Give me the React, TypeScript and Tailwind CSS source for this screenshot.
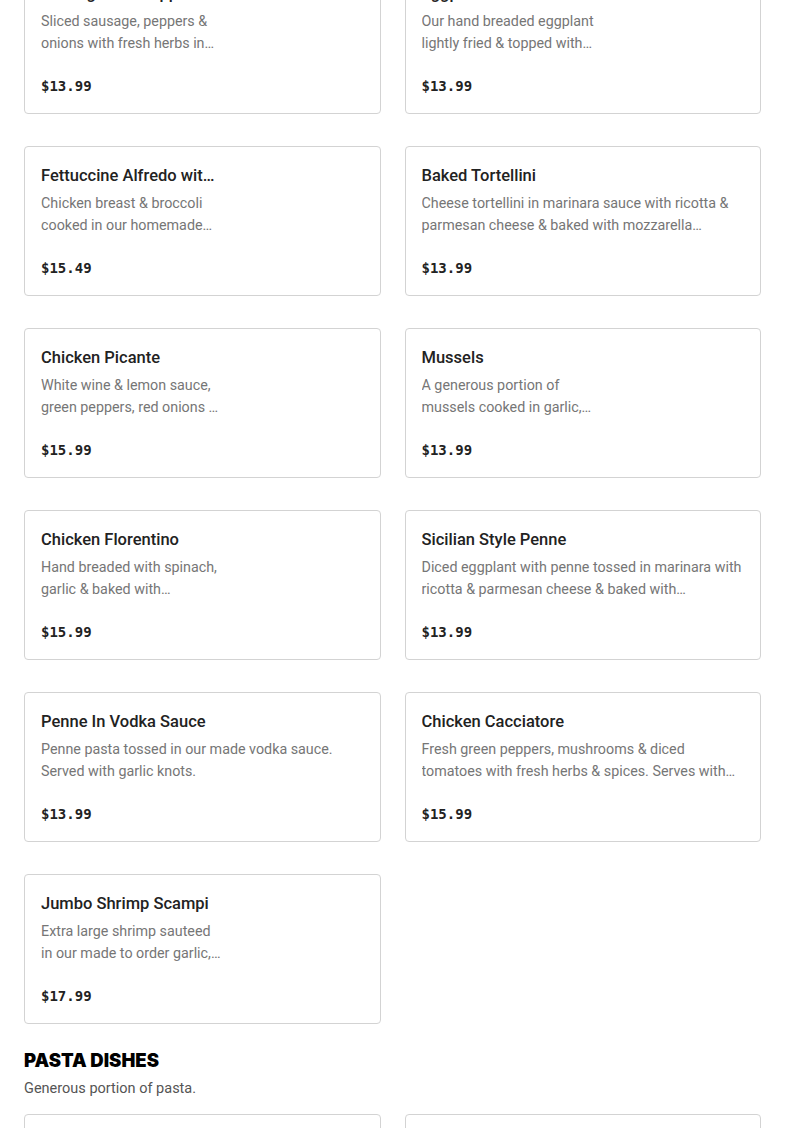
import React from "react";

type Item = {
  name: string;
  desc: string;
  price: string;
  photo?: boolean;
};

const items: Item[] = [
  { name: "Sausage and Peppers", desc: "Sliced sausage, peppers & onions with fresh herbs in marinara sauce.", price: "$13.99", photo: true },
  { name: "Eggplant Parm", desc: "Our hand breaded eggplant lightly fried & topped with marinara & mozzarella.", price: "$13.99", photo: true },
  { name: "Fettuccine Alfredo with Chicken & Broccoli", desc: "Chicken breast & broccoli cooked in our homemade alfredo sauce.", price: "$15.49", photo: true },
  { name: "Baked Tortellini", desc: "Cheese tortellini in marinara sauce with ricotta & parmesan cheese & baked with mozzarella cheese.", price: "$13.99" },
  { name: "Chicken Picante", desc: "White wine & lemon sauce, green peppers, red onions & capers.", price: "$15.99", photo: true },
  { name: "Mussels", desc: "A generous portion of mussels cooked in garlic, white wine & marinara.", price: "$13.99", photo: true },
  { name: "Chicken Florentino", desc: "Hand breaded with spinach, garlic & baked with mozzarella cheese.", price: "$15.99", photo: true },
  { name: "Sicilian Style Penne", desc: "Diced eggplant with penne tossed in marinara with ricotta & parmesan cheese & baked with mozzarella cheese.", price: "$13.99" },
  { name: "Penne In Vodka Sauce", desc: "Penne pasta tossed in our made vodka sauce. Served with garlic knots.", price: "$13.99" },
  { name: "Chicken Cacciatore", desc: "Fresh green peppers, mushrooms & diced tomatoes with fresh herbs & spices. Serves with pasta.", price: "$15.99" },
  { name: "Jumbo Shrimp Scampi", desc: "Extra large shrimp sauteed in our made to order garlic, butter & white wine sauce.", price: "$17.99", photo: true },
];

function MenuCard({ item }: { item: Item }) {
  return (
    <div className="flex h-[150px] rounded-[4px] border border-[#d3d3d3] bg-white px-4 pt-[17px] pb-[17px]">
      <div className={item.photo ? "flex w-[182px] min-w-0 flex-col" : "flex min-w-0 flex-1 flex-col"}>
        <p className="truncate text-[16.5px] font-medium leading-6 text-[#222]">{item.name}</p>
        <p className="mt-1 line-clamp-2 text-[14.3px] leading-[22px] text-[#767676]">{item.desc}</p>
        <p className="mt-auto font-['DejaVu_Sans_Mono',monospace] text-[14px] font-bold leading-5 text-[#222]">
          {item.price}
        </p>
      </div>
      {item.photo && <div className="flex-1" />}
    </div>
  );
}

export default function App() {
  return (
    <div className="min-h-screen bg-white px-6 font-['Roboto',sans-serif]">
      <div className="-mt-[36px] grid grid-cols-2 gap-x-6 gap-y-8">
        {items.map((it) => (
          <MenuCard key={it.name} item={it} />
        ))}
      </div>
      <h2 className="mt-6 font-['Inter',sans-serif] text-[18.5px] font-black uppercase leading-6 text-black">Pasta Dishes</h2>
      <p className="mt-[7px] text-[14.5px] leading-5 text-[#555]">Generous portion of pasta.</p>
      <div className="mt-[15px] grid grid-cols-2 gap-x-6 gap-y-8">
        <div className="h-[150px] rounded-[4px] border border-[#d3d3d3]" />
        <div className="h-[150px] rounded-[4px] border border-[#d3d3d3]" />
      </div>
    </div>
  );
}
